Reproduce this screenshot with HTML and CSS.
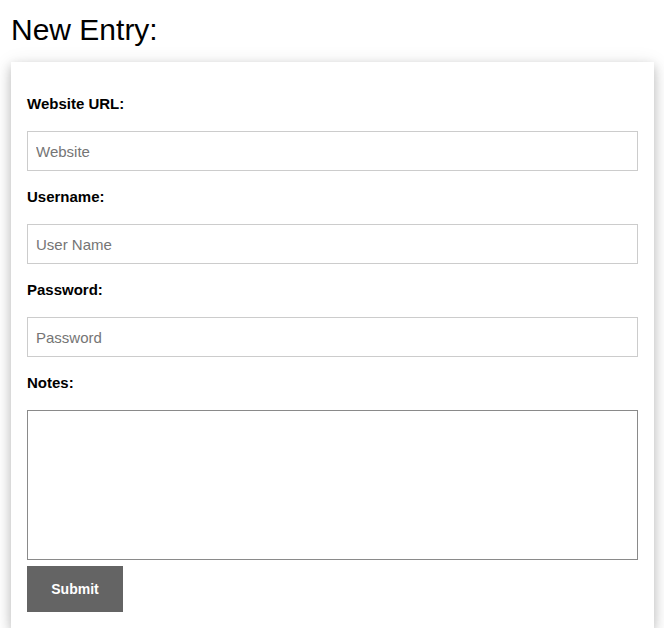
FILE: index.html
```html
<!DOCTYPE html>
<html>
<head>
<meta charset="utf-8">
<link rel="stylesheet" href="styles.css">
</head>
<body>
<h1 class="title">New Entry:</h1>
<form class="card">
  <label class="label">Website URL:</label>
  <input class="field" type="text" placeholder="Website">
  <label class="label">Username:</label>
  <input class="field" type="text" placeholder="User Name">
  <label class="label">Password:</label>
  <input class="field" type="text" placeholder="Password">
  <label class="label">Notes:</label>
  <textarea class="notes"></textarea>
  <button class="submit" type="button">Submit</button>
</form>
</body>
</html>
```
FILE: styles.css
```css
html, body {
  margin: 0;
  padding: 0;
  background: #fff;
}
body {
  font-family: "Liberation Sans", Arial, sans-serif;
  color: #000;
  padding: 0 10px 0 11px;
}
.title {
  font-weight: normal;
  font-size: 30px;
  line-height: 34px;
  margin: 13px 0 15px 0;
}
.card {
  display: flex;
  flex-direction: column;
  align-items: flex-start;
  padding: 33px 16px 16px 16px;
  background: #fff;
  box-shadow: 0 4px 10px 0 rgba(0,0,0,0.2), 0 4px 20px 0 rgba(0,0,0,0.12);
}
.label {
  font-size: 15px;
  font-weight: bold;
  line-height: 18px;
  margin-bottom: 18px;
}
.field {
  box-sizing: border-box;
  width: 100%;
  height: 40px;
  margin: 0 0 17px 0;
  padding: 0 8px;
  border: 1px solid #ccc;
  font-family: "Liberation Sans", Arial, sans-serif;
  font-size: 15px;
  outline: none;
}
.field::placeholder {
  color: #757575;
}
.notes {
  box-sizing: border-box;
  width: 100%;
  height: 150px;
  margin: 0 0 6px 0;
  border: 1px solid #8a8a8a;
  resize: none;
  font-family: "Liberation Sans", Arial, sans-serif;
}
.submit {
  width: 96px;
  height: 46px;
  background: #646464;
  color: #fff;
  border: none;
  font-family: "Liberation Sans", Arial, sans-serif;
  font-size: 14px;
  font-weight: bold;
  padding: 0;
}
```
